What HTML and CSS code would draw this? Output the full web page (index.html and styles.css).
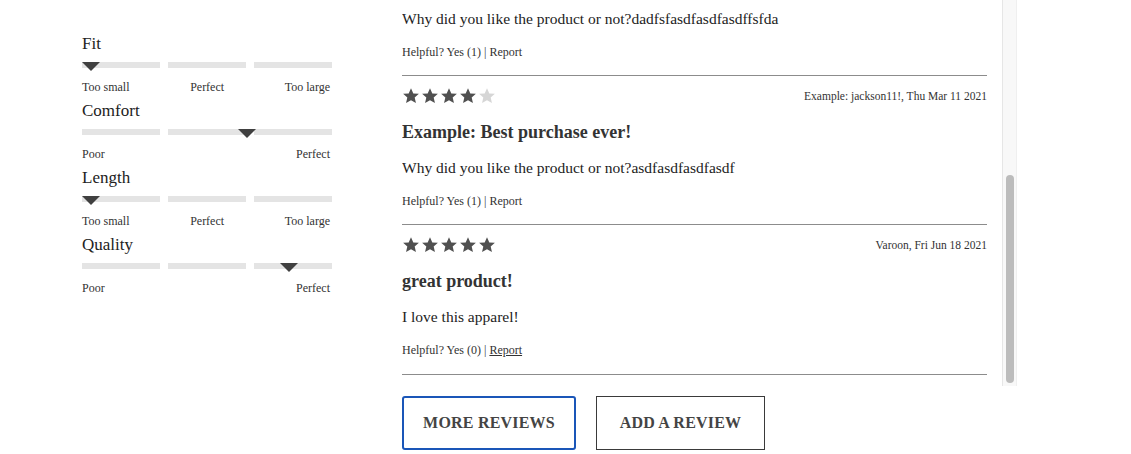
FILE: index.html
```html
<!DOCTYPE html>
<html>
<head>
<meta charset="utf-8">
<link rel="stylesheet" href="styles.css">
</head>
<body>
<div class="page">
  <aside class="factors">
    <div class="factor">
      <div class="factor-name">Fit</div>
      <div class="scale">
        <span class="seg"></span><span class="seg"></span><span class="seg"></span>
        <span class="marker" style="left:0%"></span>
      </div>
      <div class="scale-labels"><span>Too small</span><span>Perfect</span><span>Too large</span></div>
    </div>
    <div class="factor">
      <div class="factor-name">Comfort</div>
      <div class="scale">
        <span class="seg"></span><span class="seg"></span><span class="seg"></span>
        <span class="marker" style="left:62.4%"></span>
      </div>
      <div class="scale-labels"><span>Poor</span><span>Perfect</span></div>
    </div>
    <div class="factor">
      <div class="factor-name">Length</div>
      <div class="scale">
        <span class="seg"></span><span class="seg"></span><span class="seg"></span>
        <span class="marker" style="left:0%"></span>
      </div>
      <div class="scale-labels"><span>Too small</span><span>Perfect</span><span>Too large</span></div>
    </div>
    <div class="factor">
      <div class="factor-name">Quality</div>
      <div class="scale">
        <span class="seg"></span><span class="seg"></span><span class="seg"></span>
        <span class="marker" style="left:79.2%"></span>
      </div>
      <div class="scale-labels"><span>Poor</span><span>Perfect</span></div>
    </div>
  </aside>

  <main class="reviews">
    <div class="list-wrap">
      <div class="list">
        <div class="review partial">
          <p class="body">Why did you like the product or not?dadfsfasdfasdfasdffsfda</p>
          <div class="helpful">Helpful? Yes (1) | Report</div>
        </div>
        <div class="review">
          <div class="review-head">
            <div class="stars">
              <svg class="star on" viewBox="0 0 24 24"><path d="M12 1.5l3.1 7 7.4.6-5.6 4.9 1.7 7.4L12 17.6l-6.6 3.8 1.7-7.4L1.5 9.1l7.4-.6z"/></svg>
              <svg class="star on" viewBox="0 0 24 24"><path d="M12 1.5l3.1 7 7.4.6-5.6 4.9 1.7 7.4L12 17.6l-6.6 3.8 1.7-7.4L1.5 9.1l7.4-.6z"/></svg>
              <svg class="star on" viewBox="0 0 24 24"><path d="M12 1.5l3.1 7 7.4.6-5.6 4.9 1.7 7.4L12 17.6l-6.6 3.8 1.7-7.4L1.5 9.1l7.4-.6z"/></svg>
              <svg class="star on" viewBox="0 0 24 24"><path d="M12 1.5l3.1 7 7.4.6-5.6 4.9 1.7 7.4L12 17.6l-6.6 3.8 1.7-7.4L1.5 9.1l7.4-.6z"/></svg>
              <svg class="star off" viewBox="0 0 24 24"><path d="M12 1.5l3.1 7 7.4.6-5.6 4.9 1.7 7.4L12 17.6l-6.6 3.8 1.7-7.4L1.5 9.1l7.4-.6z"/></svg>
            </div>
            <div class="meta">Example: jackson11!, Thu Mar 11 2021</div>
          </div>
          <h3 class="title">Example: Best purchase ever!</h3>
          <p class="body">Why did you like the product or not?asdfasdfasdfasdf</p>
          <div class="helpful">Helpful? Yes (1) | Report</div>
        </div>
        <div class="review">
          <div class="review-head">
            <div class="stars">
              <svg class="star on" viewBox="0 0 24 24"><path d="M12 1.5l3.1 7 7.4.6-5.6 4.9 1.7 7.4L12 17.6l-6.6 3.8 1.7-7.4L1.5 9.1l7.4-.6z"/></svg>
              <svg class="star on" viewBox="0 0 24 24"><path d="M12 1.5l3.1 7 7.4.6-5.6 4.9 1.7 7.4L12 17.6l-6.6 3.8 1.7-7.4L1.5 9.1l7.4-.6z"/></svg>
              <svg class="star on" viewBox="0 0 24 24"><path d="M12 1.5l3.1 7 7.4.6-5.6 4.9 1.7 7.4L12 17.6l-6.6 3.8 1.7-7.4L1.5 9.1l7.4-.6z"/></svg>
              <svg class="star on" viewBox="0 0 24 24"><path d="M12 1.5l3.1 7 7.4.6-5.6 4.9 1.7 7.4L12 17.6l-6.6 3.8 1.7-7.4L1.5 9.1l7.4-.6z"/></svg>
              <svg class="star on" viewBox="0 0 24 24"><path d="M12 1.5l3.1 7 7.4.6-5.6 4.9 1.7 7.4L12 17.6l-6.6 3.8 1.7-7.4L1.5 9.1l7.4-.6z"/></svg>
            </div>
            <div class="meta">Varoon, Fri Jun 18 2021</div>
          </div>
          <h3 class="title">great product!</h3>
          <p class="body">I love this apparel!</p>
          <div class="helpful">Helpful? Yes (0) | <u>Report</u></div>
        </div>
      </div>
      <div class="scrollbar"><div class="thumb"></div></div>
    </div>
    <div class="actions">
      <button class="btn btn-more">MORE REVIEWS</button>
      <button class="btn">ADD A REVIEW</button>
    </div>
  </main>
</div>
</body>
</html>
```
FILE: styles.css
```css
* { box-sizing: border-box; }
html, body { margin: 0; padding: 0; background: #fff; }
body {
  font-family: "Liberation Serif", "Times New Roman", serif;
  color: #222;
}
.page {
  display: flex;
  padding-left: 82px;
  gap: 70px;
}
.factors {
  width: 250px;
  padding-top: 33px;
  flex: none;
}
.factor { padding-bottom: 5px; }
.factor-name {
  font-size: 17px;
  line-height: 22px;
  color: #222;
}
.scale {
  position: relative;
  display: flex;
  gap: 8px;
  margin-top: 7px;
  height: 6px;
}
.seg { flex: 1; background: #e4e4e4; }
.marker {
  position: absolute;
  top: 0;
  width: 0;
  height: 0;
  border-left: 9px solid transparent;
  border-right: 9px solid transparent;
  border-top: 9px solid #404040;
}
.scale-labels {
  display: flex;
  justify-content: space-between;
  margin-top: 11px;
  font-size: 12px;
  line-height: 16px;
  color: #333;
  padding-right: 2px;
}
.reviews { flex: none; width: 615px; }
.list-wrap {
  display: flex;
  gap: 15px;
  height: 386px;
}
.list {
  width: 585px;
  flex: none;
  padding-top: 9px;
  overflow: hidden;
}
.review {
  border-bottom: 1px solid #8c8c8c;
  padding-bottom: 15px;
}
.review:last-child { padding-bottom: 16px; }
.review-head {
  display: flex;
  justify-content: space-between;
  align-items: center;
  height: 20px;
  margin-top: 10px;
}
.stars { display: flex; gap: 1px; }
.star { width: 18px; height: 18px; display: block; }
.star.on { fill: #505050; }
.star.off { fill: #d6d6d6; }
.meta { font-size: 11.5px; color: #333; }
.title {
  margin: 14px 0 0;
  font-size: 18px;
  line-height: 24px;
  font-weight: bold;
  color: #333;
}
.body {
  margin: 14px 0 0;
  font-size: 15.5px;
  line-height: 20px;
  color: #222;
}
.review.partial .body { margin-top: 0; }
.helpful {
  margin-top: 15px;
  font-size: 12px;
  line-height: 16px;
  color: #333;
}
.scrollbar {
  width: 15px;
  flex: none;
  background: #f8f8f8;
  border-left: 1px solid #e6e6e6;
  border-right: 1px solid #efefef;
  display: flex;
  flex-direction: column;
  justify-content: flex-end;
  padding: 0 2px 3px 3px;
}
.thumb {
  height: 208px;
  background: #bcbcbc;
  border-radius: 4px;
}
.actions {
  display: flex;
  gap: 20px;
  margin-top: 10px;
}
.btn {
  font-family: inherit;
  font-weight: bold;
  font-size: 16px;
  color: #444;
  background: #fff;
  border: 1px solid #3a3a3a;
  height: 54px;
  width: 169px;
  padding: 0;
  letter-spacing: 0.2px;
}
.btn-more {
  width: 174px;
  border: 2px solid #1a56b8;
  border-radius: 3px;
}
```
